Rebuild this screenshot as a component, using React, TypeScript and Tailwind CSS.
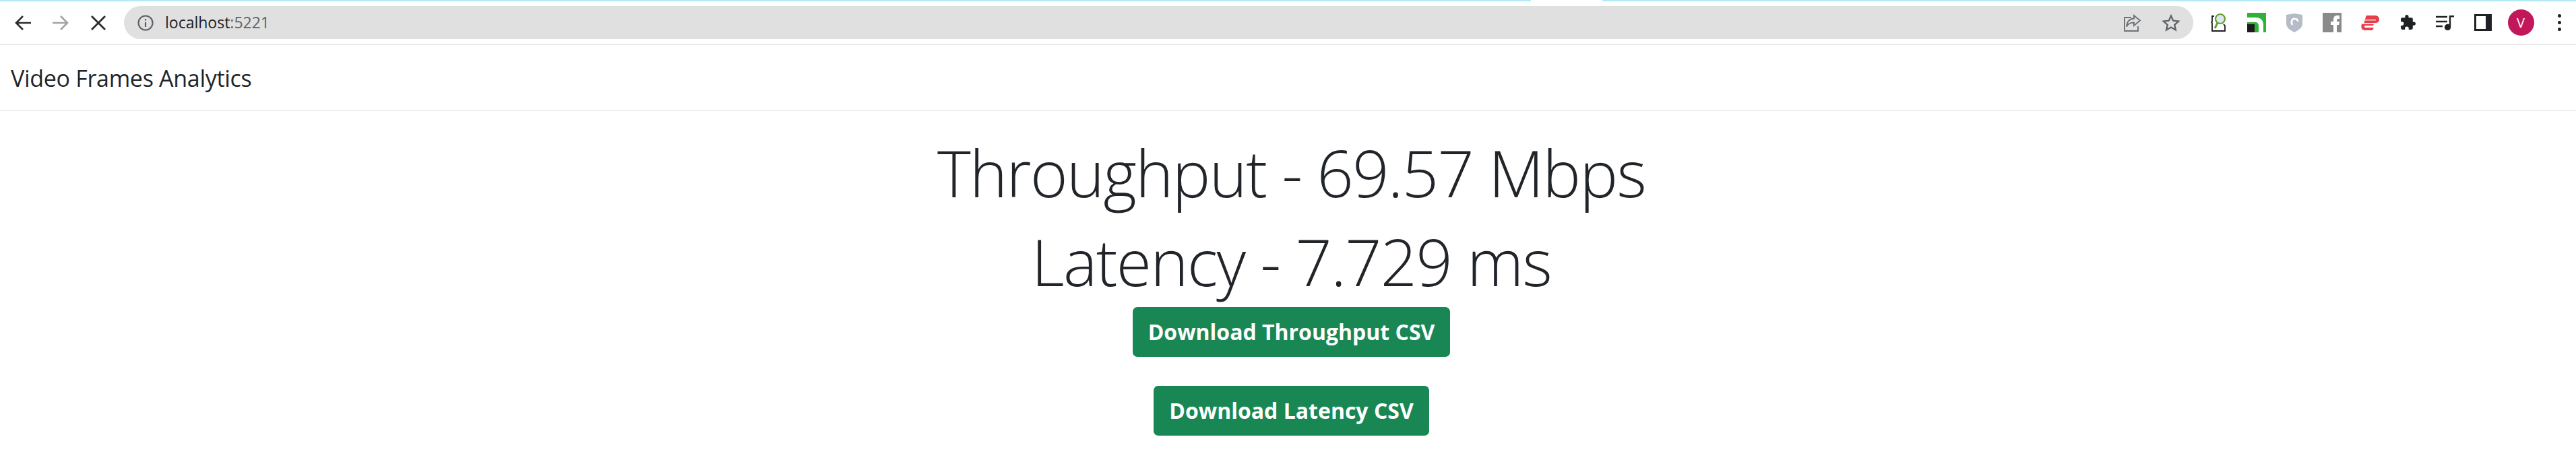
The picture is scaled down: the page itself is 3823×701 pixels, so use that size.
const sans = "font-['Open_Sans','Noto_Sans',sans-serif]"

function Slot({ children }: { children: React.ReactNode }) {
  return <div className="flex h-full w-[56px] shrink-0 items-center justify-center">{children}</div>
}

function BrowserBar() {
  return (
    <div className="bg-white">
      {/* page load progress */}
      <div className="flex h-[2px]">
        <div className="w-[2272px] bg-[#b2e9f4]" />
        <div className="w-[106px]" />
        <div className="flex-1 bg-[#b2e9f4]" />
      </div>
      <div className="flex h-[63px] items-start pt-[7px]">
        <div className="flex h-[49px] w-[174px] shrink-0 pl-[6px]">
          <Slot>
            <svg width="26" height="26" viewBox="0 0 26 26" fill="none" stroke="#2b2c2f" strokeWidth="2.6">
              <path d="M25 13H3M13 3 3 13l10 10" />
            </svg>
          </Slot>
          <Slot>
            <svg width="26" height="26" viewBox="0 0 26 26" fill="none" stroke="#a3a3a3" strokeWidth="2.6">
              <path d="M1 13h22M13 3l10 10-10 10" />
            </svg>
          </Slot>
          <Slot>
            <svg width="24" height="24" viewBox="0 0 24 24" fill="none" stroke="#2b2c2f" strokeWidth="2.8">
              <path d="M2 2l20 20M22 2 2 22" />
            </svg>
          </Slot>
        </div>
        <div className="ml-[10px] flex h-[49px] min-w-0 flex-1 items-center rounded-full bg-[#e0e0e0] pl-[20px]">
          <svg width="24" height="24" viewBox="0 0 24 24" fill="none" stroke="#5f6368" strokeWidth="2.2">
            <circle cx="12" cy="12" r="10.5" />
            <path d="M12 11v7M12 6v2.4" />
          </svg>
          <span className={`ml-[17px] text-[23px] leading-none text-[#202124] ${sans}`}>
            localhost<span className="text-[#5f6368]">:5221</span>
          </span>
          <div className="ml-auto flex items-center gap-[30px] pr-[19px]">
            <svg width="28" height="28" viewBox="0 0 28 28" fill="none" stroke="#6f7276" strokeWidth="1.9">
              <path d="M13 6H3v20h20v-7" />
              <path d="M17 3l9 7.5-9 7.5v-4.5c-5 0-9 2-11 6 .5-7 4.500-11.500 11-12z" />
            </svg>
            <svg width="28" height="28" viewBox="0 0 24 24" fill="none" stroke="#5f6368" strokeWidth="2">
              <path d="M12 3l2.800 6.100 6.700.8-5 4.500 1.400 6.600-5.900-3.400-5.900 3.400 1.400-6.600-5-4.500 6.700-.8z" />
            </svg>
          </div>
        </div>
        <div className="ml-[10px] flex h-[49px] w-[558px] shrink-0">
          <Slot>
            <svg width="24" height="30" viewBox="0 0 24 30" fill="none">
              <path d="M5 5H2v8l-1 1 1 1v12h19v-8l-2-2" stroke="#1f1f1f" strokeWidth="1.800" />
              <circle cx="14" cy="9" r="7" fill="#dbe8f0" stroke="#63a02c" strokeWidth="2.200" />
              <path d="M10 15l-4 8" stroke="#63a02c" strokeWidth="3" />
            </svg>
          </Slot>
          <Slot>
            <svg width="28" height="29" viewBox="0 0 28 29">
              <rect width="28" height="29" fill="#2fb239" />
              <path d="M0 7h13c8 0 11 5 11 11v11h-7V19c0-3-2-5-5-5H0z" fill="#fff" />
              <rect y="17" width="11" height="12" fill="#1f1a17" />
            </svg>
          </Slot>
          <Slot>
            <svg width="24" height="28" viewBox="0 0 24 28">
              <path d="M0 2 12 0l12 2v13c0 6-6 10-12 13C6 25 0 21 0 15z" fill="#b6bcc7" />
              <path d="M9 17c-3-5 0-10 4-9 3 0 4 2 4 4" fill="none" stroke="#fff" strokeWidth="2.600" />
            </svg>
          </Slot>
          <Slot>
            <svg width="28" height="29" viewBox="0 0 28 29">
              <rect width="28" height="29" fill="#8a8a8a" />
              <path d="M16 29V18h-4v-5h4v-3c0-4 2-6 6-6h3v5h-2c-2 0-2 1-2 2v2h4l-1 5h-3v11z" fill="#fff" />
            </svg>
          </Slot>
          <Slot>
            <svg width="28" height="22" viewBox="0 0 28 22">
              <path d="M9 0H22c4 0 6 3 6 6s-2 5-6 5H5.500L8 2z" fill="#e3404a" />
              <path d="M7 6.800h16" stroke="#fff" strokeWidth="1.200" />
              <path d="M2 12.500H20L19 15H7c-1 0-1.500 2 0 3h13l-2 4H7C3 22 0 19 2 12.500z" fill="#e3404a" />
            </svg>
          </Slot>
          <Slot>
            <svg width="25" height="25" viewBox="0 0 24 24" fill="#202124">
              <path d="M20.500 11H19V7a2 2 0 0 0-2-2h-4V3.500a2.500 2.500 0 0 0-5 0V5H4a2 2 0 0 0-2 2v3.800h1.500a2.700 2.700 0 0 1 0 5.400H2V20a2 2 0 0 0 2 2h3.800v-1.500a2.700 2.700 0 0 1 5.400 0V22H17a2 2 0 0 0 2-2v-4h1.500a2.500 2.500 0 0 0 0-5z" />
            </svg>
          </Slot>
          <Slot>
            <svg width="28" height="22" viewBox="0 0 28 22" fill="none" stroke="#202124" strokeWidth="2.400">
              <path d="M0 2h17M0 9h17M0 16h10" />
              <path d="M21 17V1.200h6" />
              <circle cx="17.500" cy="17.500" r="3.500" fill="#202124" />
            </svg>
          </Slot>
          <Slot>
            <svg width="26" height="25" viewBox="0 0 26 25">
              <rect width="26" height="25" fill="#202124" />
              <rect x="3" y="3" width="14" height="19" fill="#fff" />
            </svg>
          </Slot>
          <Slot>
            <div className={`flex h-[39px] w-[39px] items-center justify-center rounded-full bg-[#c2185b] text-[20px] text-white ${sans}`}>
              V
            </div>
          </Slot>
          <div className="flex h-full w-[54px] shrink-0 items-center justify-center pl-[4px]">
            <div className="flex flex-col gap-[5px]">
              <div className="h-[5px] w-[5px] rounded-full bg-[#202124]" />
              <div className="h-[5px] w-[5px] rounded-full bg-[#202124]" />
              <div className="h-[5px] w-[5px] rounded-full bg-[#202124]" />
            </div>
          </div>
        </div>
      </div>
      <div className="h-px bg-[#cfcfcf]" />
    </div>
  )
}

function DownloadButton({ label }: { label: string }) {
  return (
    <button className={`rounded-[7px] bg-[#198754] px-[23px] py-[12px] text-[32px] leading-[50px] font-bold text-white ${sans}`}>
      {label}
    </button>
  )
}

export default function App() {
  return (
    <div className="min-h-[701px] bg-white">
      <BrowserBar />
      <nav className="flex h-[99px] items-center border-b border-[#dee2e6] pt-[2px] pl-[16px]">
        <span className={`text-[34px] tracking-[-0.3px] text-[#212529] ${sans}`}>Video Frames Analytics</span>
      </nav>
      <main className={`flex flex-col items-center pl-[10px] text-[#212529] ${sans}`}>
        <h1 className="mt-[32px] text-[95px] leading-[118px] font-light tracking-[-1.6px]">Throughput - 69.57 Mbps</h1>
        <h1 className="mt-[14px] text-[95px] leading-[118px] font-light tracking-[-1.6px]">Latency - 7.729 ms</h1>
        <div className="mt-[9px] flex flex-col items-center gap-[43px]">
          <DownloadButton label="Download Throughput CSV" />
          <DownloadButton label="Download Latency CSV" />
        </div>
      </main>
    </div>
  )
}
